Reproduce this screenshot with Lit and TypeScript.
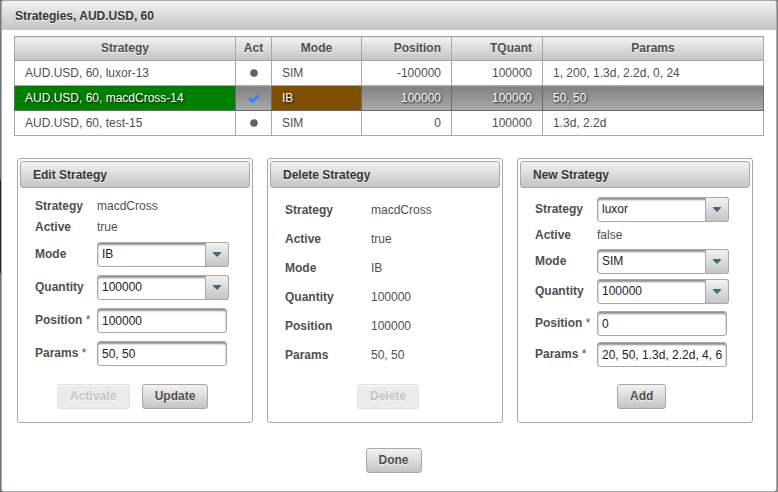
import { LitElement, html, css, svg } from "lit";
import { customElement } from "lit/decorators.js";
import { classMap } from "lit/directives/class-map.js";

interface Strategy {
  name: string;
  active: boolean;
  mode: string;
  position: string;
  quantity: string;
  params: string;
  selected?: boolean;
}

const STRATEGIES: Strategy[] = [
  { name: "AUD.USD, 60, luxor-13", active: false, mode: "SIM", position: "-100000", quantity: "100000", params: "1, 200, 1.3d, 2.2d, 0, 24" },
  { name: "AUD.USD, 60, macdCross-14", active: true, mode: "IB", position: "100000", quantity: "100000", params: "50, 50", selected: true },
  { name: "AUD.USD, 60, test-15", active: false, mode: "SIM", position: "0", quantity: "100000", params: "1.3d, 2.2d" },
];

const dot = svg`<circle cx="8" cy="8" r="3.8" fill="#616161"/>`;
const check = svg`<path d="M3.2 8.2 L6.8 11.4 L13 5" fill="none" stroke="#2a84ff" stroke-width="2.8"/>`;

@customElement("app-root")
export class AppRoot extends LitElement {
  static styles = css`
    :host {
      display: flex;
      min-height: 100vh;
      box-sizing: border-box;
      padding: 0 1px;
      background: linear-gradient(#6d7887 36%, #22262d 37%, #22262d 55%, #6d7887 56%) left / 50% 100% no-repeat #7d8288;
      color: #4f4f4f;
      font: 12px/15px "Liberation Sans", Arial, sans-serif;
    }
    * { box-sizing: border-box; }
    .dialog {
      flex: 1;
      min-width: 0;
      background: #fff;
      border: 1px solid #a8a8a8;
      border-radius: 3px;
      overflow: hidden;
    }
    .bar {
      background: linear-gradient(#f2f2f2, #c4c4c4);
      color: #363636;
      font-weight: bold;
      text-shadow: 0 1px 0 rgba(255, 255, 255, 0.7);
    }
    .title {
      margin: 0;
      height: 29px;
      padding: 8px 13px 0;
      font-size: 12px;
    }
    .content { padding: 6px 12px 18px; }
    .grid {
      width: 100%;
      table-layout: fixed;
      border-collapse: collapse;
    }
    .grid th, .grid td {
      height: 25px;
      padding: 0 10px;
      border: 1px solid #a8a8a8;
      text-align: left;
      white-space: nowrap;
    }
    .grid th {
      height: 24px;
      background: linear-gradient(#f2f2f2, #c4c4c4);
      text-align: center;
      text-shadow: 0 1px 0 rgba(255, 255, 255, 0.7);
    }
    .grid .num { text-align: right; }
    .grid .act { padding: 0; text-align: center; }
    .col-act { width: 36px; }
    .col-num { width: 90px; }
    .col-quant { width: 91px; }
    .mark { display: block; margin: 0 auto; }
    .selected td {
      background: linear-gradient(#808080, #ababab);
      border-color: #6b6b6b;
      color: #fff;
      text-shadow: 1px 1px 2px rgba(0, 0, 0, 0.9);
    }
    .selected .name { background: #008000; }
    .selected .live { background: #805000; }
    .panels {
      display: grid;
      grid-template-columns: repeat(3, 1fr);
      gap: 14px;
      margin: 22px 11px 0 3px;
    }
    .panel {
      display: flex;
      flex-direction: column;
      min-width: 0;
      padding: 2px 2px 13px;
      border: 1px solid #a8a8a8;
      border-radius: 3px;
    }
    .panel-title {
      margin: 0 0 8px;
      height: 27px;
      padding: 6px 12px;
      border: 1px solid #a8a8a8;
      border-radius: 3px;
      font-size: 12px;
    }
    .fields {
      display: grid;
      grid-template-columns: 62px 1fr;
      align-items: center;
      padding-left: 15px;
    }
    .edit .fields { grid-template-rows: 21px 21px repeat(4, 33px); }
    .remove .fields { grid-template-columns: 86px 1fr; grid-template-rows: repeat(6, 29px); }
    .create .fields { grid-template-rows: 27px 25px 27px 33px 31px 31px; }
    .label { font-weight: bold; text-shadow: 0 1px 0 rgba(255, 255, 255, 0.7); }
    .star { font-weight: normal; }
    .pick {
      display: grid;
      grid-template-columns: 1fr 24px;
      width: 132px;
      height: 25px;
    }
    .box {
      font: inherit;
      color: #222;
      height: 25px;
      padding: 0 3px 0 4px;
      border: 1px solid #a8a8a8;
      border-radius: 3px;
      background: #fff;
      box-shadow: inset 0 2px 2px #8f8f8f;
      appearance: none;
      outline: none;
    }
    .text { width: 130px; }
    .pick .box { grid-area: 1 / 1 / 2 / 3; }
    .arrow {
      grid-area: 1 / 2 / 2 / 3;
      display: grid;
      place-items: center;
      border: 1px solid #a8a8a8;
      border-radius: 0 3px 3px 0;
      background: linear-gradient(#f2f2f2, #c4c4c4);
      pointer-events: none;
    }
    .actions {
      display: flex;
      gap: 12px;
      margin-top: auto;
      padding-top: 14px;
    }
    .edit .actions { padding-left: 37px; }
    .remove .actions { padding-left: 87px; }
    .create .actions { padding-left: 97px; }
    .btn {
      height: 25px;
      padding: 0 12px;
      border: 1px solid #a8a8a8;
      border-radius: 3px;
      background: linear-gradient(#f2f2f2, #c4c4c4);
      color: #4f4f4f;
      font: bold 12px/15px "Liberation Sans", Arial, sans-serif;
      text-shadow: 0 1px 0 rgba(255, 255, 255, 0.7);
    }
    .btn:disabled {
      border-color: #e0e0e0;
      background: #ebebeb;
      color: #c4c4c4;
      box-shadow: inset 0 1px 0 #fafafa;
    }
    .footer {
      display: flex;
      justify-content: center;
      margin-top: 25px;
      padding-left: 9px;
    }
  `;

  private row(s: Strategy) {
    return html`<tr class=${classMap({ selected: !!s.selected })}>
      <td class="name">${s.name}</td>
      <td class="act">
        <svg class="mark" width="16" height="16" role="img" aria-label=${s.active ? "active" : "inactive"}>${s.active ? check : dot}</svg>
      </td>
      <td class=${classMap({ live: s.mode === "IB" })}>${s.mode}</td>
      <td class="num">${s.position}</td>
      <td class="num">${s.quantity}</td>
      <td>${s.params}</td>
    </tr>`;
  }

  private fact(label: string, value: string) {
    return html`<span class="label">${label}</span><span>${value}</span>`;
  }

  private choice(id: string, label: string, options: string[]) {
    return html`<label class="label" for=${id}>${label}</label>
      <span class="pick">
        <select class="box" id=${id}>${options.map((o) => html`<option>${o}</option>`)}</select>
        <span class="arrow">
          <svg width="8" height="6"><path d="M0 0 H8 V1 L4 5 L0 1 Z" fill="#3a6a85"/></svg>
        </span>
      </span>`;
  }

  private entry(id: string, label: string, value: string) {
    return html`<label class="label" for=${id}>${label} <span class="star">*</span></label>
      <input class="box text" id=${id} type="text" required .value=${value} />`;
  }

  render() {
    return html`<section class="dialog" role="dialog" aria-labelledby="title">
      <h1 class="bar title" id="title">Strategies, AUD.USD, 60</h1>
      <div class="content">
        <table class="grid">
          <colgroup>
            <col /><col class="col-act" /><col class="col-num" /><col class="col-num" /><col class="col-quant" /><col />
          </colgroup>
          <thead>
            <tr>
              <th>Strategy</th><th class="act">Act</th><th>Mode</th>
              <th class="num">Position</th><th class="num">TQuant</th><th>Params</th>
            </tr>
          </thead>
          <tbody>${STRATEGIES.map((s) => this.row(s))}</tbody>
        </table>

        <div class="panels">
          <section class="panel edit">
            <h2 class="bar panel-title">Edit Strategy</h2>
            <div class="fields">
              ${this.fact("Strategy", "macdCross")}
              ${this.fact("Active", "true")}
              ${this.choice("edit-mode", "Mode", ["IB", "SIM"])}
              ${this.choice("edit-quantity", "Quantity", ["100000"])}
              ${this.entry("edit-position", "Position", "100000")}
              ${this.entry("edit-params", "Params", "50, 50")}
            </div>
            <div class="actions">
              <button class="btn" type="button" disabled>Activate</button>
              <button class="btn" type="button">Update</button>
            </div>
          </section>

          <section class="panel remove">
            <h2 class="bar panel-title">Delete Strategy</h2>
            <div class="fields">
              ${this.fact("Strategy", "macdCross")}
              ${this.fact("Active", "true")}
              ${this.fact("Mode", "IB")}
              ${this.fact("Quantity", "100000")}
              ${this.fact("Position", "100000")}
              ${this.fact("Params", "50, 50")}
            </div>
            <div class="actions">
              <button class="btn" type="button" disabled>Delete</button>
            </div>
          </section>

          <section class="panel create">
            <h2 class="bar panel-title">New Strategy</h2>
            <div class="fields">
              ${this.choice("new-strategy", "Strategy", ["luxor", "macdCross", "test"])}
              ${this.fact("Active", "false")}
              ${this.choice("new-mode", "Mode", ["SIM", "IB"])}
              ${this.choice("new-quantity", "Quantity", ["100000"])}
              ${this.entry("new-position", "Position", "0")}
              ${this.entry("new-params", "Params", "20, 50, 1.3d, 2.2d, 4, 6")}
            </div>
            <div class="actions">
              <button class="btn" type="button">Add</button>
            </div>
          </section>
        </div>

        <div class="footer"><button class="btn" type="button">Done</button></div>
      </div>
    </section>`;
  }
}
